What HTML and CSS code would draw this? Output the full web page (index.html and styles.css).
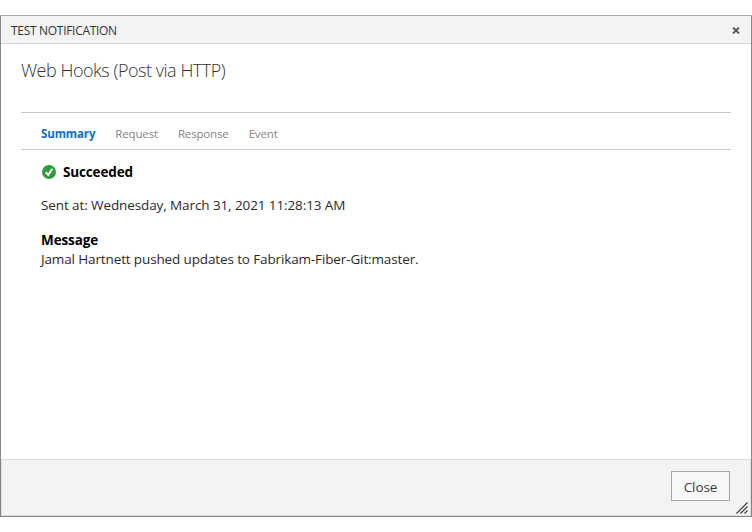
FILE: index.html
```
<!DOCTYPE html>
<html lang="en">
<head>
<meta charset="utf-8">
<title>Test Notification</title>
<link rel="stylesheet" href="styles.css">
</head>
<body>
<div class="dialog">
  <header class="titlebar">
    <span class="title">TEST NOTIFICATION</span>
    <svg class="dismiss" width="8" height="7" viewBox="0 0 8 7"><path d="M1 .5L7 6.5M7 .5L1 6.5" stroke="#555" stroke-width="1.8"/></svg>
  </header>
  <main class="content">
    <h1 class="heading"><span>Web Hooks (Post via HTTP)</span></h1>
    <nav class="tabs">
      <span class="tab active">Summary</span>
      <span class="tab request">Request</span>
      <span class="tab response">Response</span>
      <span class="tab event">Event</span>
    </nav>
    <section class="summary">
      <div class="status">
        <svg width="14" height="14" viewBox="0 0 14 14"><circle cx="7" cy="7" r="7" fill="#319b3f"/><path d="M3.7 7.3L6.2 10L10.3 3.9" fill="none" stroke="#fff" stroke-width="2"/></svg>
        <span class="result">Succeeded</span>
      </div>
      <p class="sent"><span>Sent at: Wednesday, March 31, 2021 11:28:13 AM</span></p>
      <h2 class="label"><span>Message</span></h2>
      <p class="message"><span>Jamal Hartnett pushed updates to Fabrikam-Fiber-Git:master.</span></p>
    </section>
  </main>
  <footer class="footer">
    <button class="close"><span>Close</span></button>
    <svg class="grip" width="12" height="12" viewBox="0 0 12 12"><path d="M.5 11.5L11.5 .5M4.5 11.5L11.5 4.5M8.5 11.5L11.5 8.5" stroke="#333" stroke-width="1.1"/></svg>
  </footer>
</div>
</body>
</html>
```
FILE: styles.css
```
* { box-sizing: border-box; }
body { margin: 0; padding-top: 15px; background: #fff; color: #2a2a2a; font: 400 13.5px/20px "Open Sans", "Noto Sans", sans-serif; }
h1, h2, p { margin: 0; }
svg { display: block; flex: none; }
.dialog { width: 752px; height: 502px; display: flex; flex-direction: column; border: 1px solid #858585; border-top-color: #aaa; background: #fff; }
.titlebar { height: 28px; display: flex; align-items: center; justify-content: space-between; padding: 1px 11px 0 10px; background: #f3f3f3; border-bottom: 1px solid #d8d8d8; }
.title { padding-top: 1px; font-size: 12px; letter-spacing: -.3px; color: #333; }
.content { flex: 1; padding: 0 20px; }
.heading { height: 68px; padding-top: 14px; font-size: 18px; font-weight: 300; line-height: 24px; color: #333; letter-spacing: -.47px; }
.tabs { height: 38px; display: flex; align-items: center; padding: 5px 20px 0; border: solid #c8c8c8; border-width: 1px 0; font-size: 11.5px; letter-spacing: -.16px; color: #858585; }
.tab { margin-right: 20px; }
.active { color: #106ebe; font-weight: 700; letter-spacing: -.12px; }
.summary { padding: 12px 20px 0; }
.status { height: 20px; display: flex; align-items: center; gap: 7px; padding-left: 1px; color: #000; font-weight: 700; letter-spacing: -.15px; }
.sent { margin-top: 13px; letter-spacing: -.1px; }
.label { margin-top: 15px; font-size: 13.5px; letter-spacing: -.1px; color: #000; }
.message { margin-top: -1px; letter-spacing: -.13px; }
.footer { height: 57px; position: relative; display: flex; justify-content: flex-end; padding: 11px 20px 0 0; background: #f3f3f3; border: 1px solid #dcdcdc; }
.close { width: 59px; height: 30px; padding: 2px 0 0; border: 1px solid #a6a6a6; background: #f8f8f8; color: #3a3a3a; font: 400 13.5px/20px "Open Sans", sans-serif; letter-spacing: -.1px; }
.grip { position: absolute; right: 2px; bottom: 1px; }
```
